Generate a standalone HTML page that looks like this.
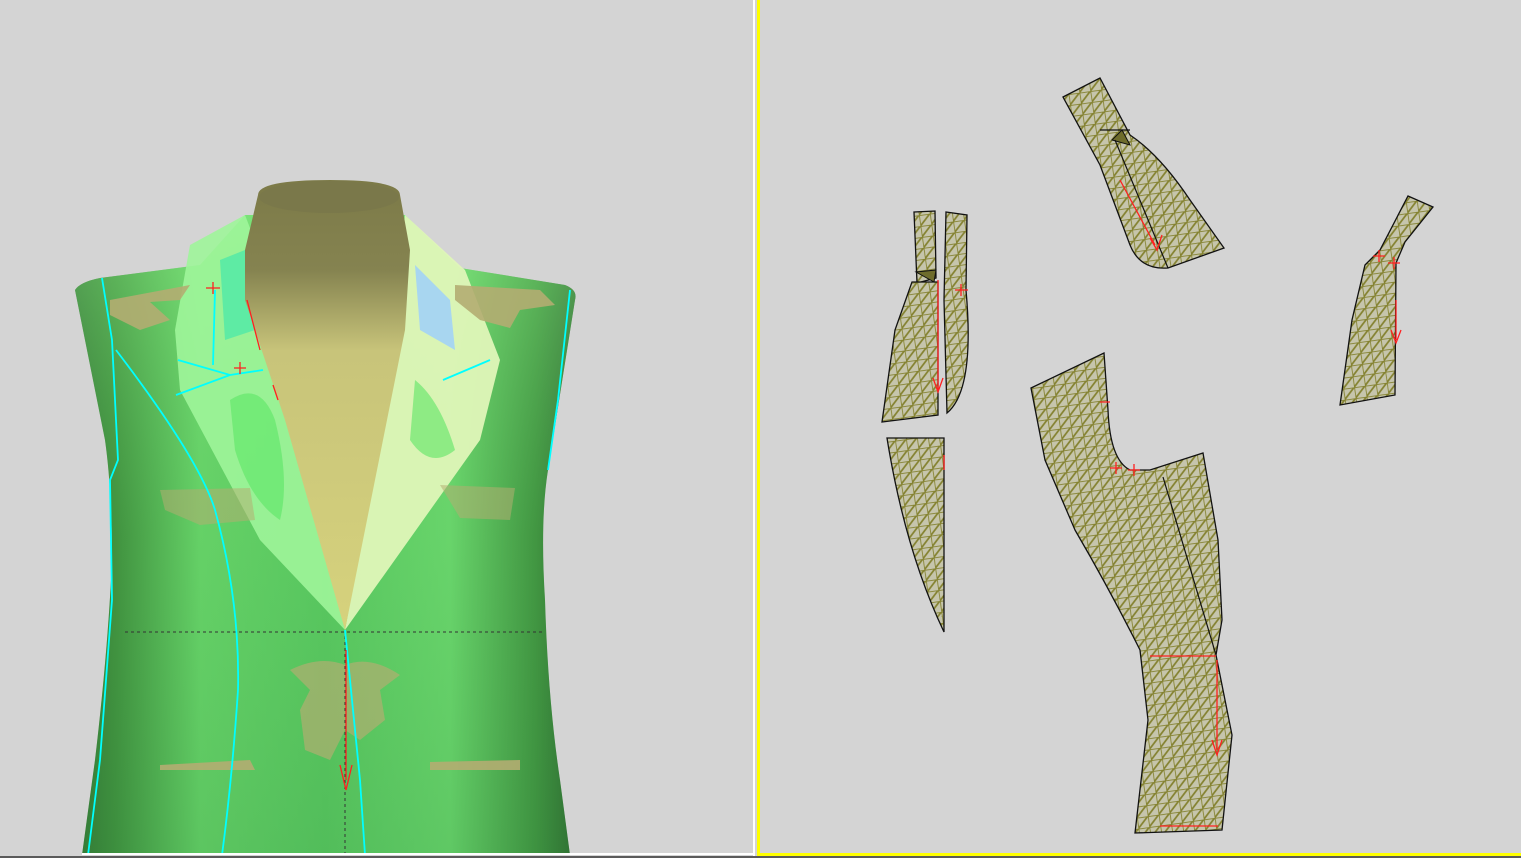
<!DOCTYPE html>
<html><head><style>
html,body{margin:0;padding:0;background:#d4d4d4;width:1521px;height:858px;overflow:hidden}
svg{display:block}
</style></head><body>
<svg width="1521" height="858" viewBox="0 0 1521 858" xmlns="http://www.w3.org/2000/svg">
<defs>
<pattern id="mesh" width="11" height="11" patternUnits="userSpaceOnUse" patternTransform="rotate(-8)">
<rect width="11" height="11" fill="#c6c5ac"/>
<path d="M0 0H11M0 0V11M0 11L11 0" stroke="#848230" stroke-width="1.7" fill="none"/>
</pattern>
<linearGradient id="body" x1="0" x2="1" y1="0" y2="0">
<stop offset="0" stop-color="#2f6a2e"/>
<stop offset="0.08" stop-color="#3e8a3a"/>
<stop offset="0.25" stop-color="#6bd86b"/>
<stop offset="0.5" stop-color="#5ccc62"/>
<stop offset="0.75" stop-color="#6fdc70"/>
<stop offset="0.92" stop-color="#3f8f3d"/>
<stop offset="1" stop-color="#2a5e2a"/>
</linearGradient>
<linearGradient id="bodyv" x1="0" x2="0" y1="0" y2="1">
<stop offset="0" stop-color="#8ff08a" stop-opacity="0.5"/>
<stop offset="0.5" stop-color="#4cb455" stop-opacity="0.2"/>
<stop offset="1" stop-color="#3a9a48" stop-opacity="0.3"/>
</linearGradient>
<linearGradient id="neck" x1="0" x2="0" y1="0" y2="1">
<stop offset="0" stop-color="#7c7a48"/>
<stop offset="0.2" stop-color="#858350"/>
<stop offset="0.38" stop-color="#c8c47a"/>
<stop offset="1" stop-color="#d6d27c"/>
</linearGradient>
</defs>
<rect width="1521" height="858" fill="#d4d4d4"/>
<path d="M75 290 Q80 282 100 278 L200 265 L245 215 L405 215 L460 268 L565 285 Q578 290 575 300 L548 470 Q540 520 545 600 Q548 700 560 780 L570 855 L82 855 L95 760 Q108 650 112 560 Q112 490 105 440 Z" fill="url(#body)"/>
<path d="M75 290 Q80 282 100 278 L200 265 L245 215 L405 215 L460 268 L565 285 Q578 290 575 300 L548 470 Q540 520 545 600 Q548 700 560 780 L570 855 L82 855 L95 760 Q108 650 112 560 Q112 490 105 440 Z" fill="url(#bodyv)"/>
<path d="M190 245 L245 215 L270 280 L345 630 L260 540 L180 390 L175 330 Z" fill="#9ff59a" opacity="0.9"/>
<path d="M405 215 L465 270 L500 360 L480 440 L345 630 L380 440 Z" fill="#dff5b8" opacity="0.95"/>
<path d="M415 265 L450 300 L455 350 L420 330 Z" fill="#a8d6f0"/>
<path d="M220 260 L245 250 L255 330 L225 340 Z" fill="#4fe8a8" opacity="0.8"/>
<path d="M230 400 Q260 380 275 420 Q290 480 280 520 Q250 500 235 450 Z" fill="#6ae870" opacity="0.8"/>
<path d="M415 380 Q440 400 455 450 Q430 470 410 440 Z" fill="#7ae878" opacity="0.8"/>
<g fill="#b4ad72" opacity="0.9">
<path d="M110 300 L190 285 L180 300 L150 302 L170 320 L140 330 L110 315 Z"/>
<path d="M455 285 L540 290 L555 305 L520 310 L510 328 L480 320 L455 300 Z"/>
<path d="M160 490 L250 488 L255 520 L200 525 L165 510 Z" opacity="0.6"/>
<path d="M440 485 L515 488 L510 520 L460 518 Z" opacity="0.6"/>
<path d="M290 670 Q320 655 345 665 Q370 655 400 675 L380 690 L385 720 L360 740 L345 730 L330 760 L305 750 L300 710 L310 690 Z" opacity="0.75"/>
<path d="M160 765 L250 760 L255 770 L160 770 Z"/>
<path d="M430 762 L520 760 L520 770 L430 770 Z"/>
</g>
<path d="M258 195 Q258 180 330 180 Q400 180 400 195 L410 250 L405 330 L345 630 L285 420 L245 300 L245 250 Z" fill="url(#neck)"/>
<ellipse cx="329" cy="197" rx="70" ry="16" fill="#7a784a"/>
<line x1="125" y1="632" x2="545" y2="632" stroke="#333" stroke-dasharray="3,3" stroke-width="1"/>
<line x1="345" y1="630" x2="345" y2="855" stroke="#333" stroke-dasharray="3,3" stroke-width="1"/>
<g fill="none" stroke="#00ffff" stroke-width="1.8">
<path d="M102 278 L112 340 L118 460 L110 480 L112 600 L100 760 L88 855"/>
<path d="M116 350 Q200 460 215 510 Q240 600 238 690 Q232 780 222 855"/>
<path d="M570 290 L558 400 L548 470"/>
<path d="M345 630 Q352 700 360 780 L365 855"/>
<path d="M215 290 L213 365 M178 360 L230 375 L263 370 M176 395 L230 375 M443 380 L490 360"/>
</g>
<g stroke="#ff2020" stroke-width="1.3" fill="none">
<path d="M247 300 L260 350 M273 385 L278 400 M346 650 L346 780 M340 765 L346 790 L352 765"/>
<path d="M206 288 H220 M213 282 V294 M234 368 H246 M240 362 V374"/>
</g>
<rect x="753" y="0" width="2" height="858" fill="#ffffff"/>
<rect x="82" y="853" width="671" height="2" fill="#ffffff"/>
<rect x="757" y="0" width="3" height="856" fill="#ffff00"/>
<rect x="757" y="853" width="764" height="3" fill="#ffff00"/>
<rect x="0" y="856" width="1521" height="2" fill="#5a5a5a"/>
<g fill="url(#mesh)" stroke="#111" stroke-width="1.3">
<path d="M1063 97 L1100 78 L1130 135 Q1160 155 1190 200 L1224 248 L1168 268 Q1140 270 1130 245 L1100 165 Z"/>
<path d="M914 212 L935 211 L936 278 L917 283 Z"/>
<path d="M946 212 L967 215 L966 290 Q975 390 947 413 L944 300 Z"/>
<path d="M912 282 L938 282 L938 415 L882 422 L895 330 Z"/>
<path d="M887 438 L944 438 L944 632 Q905 550 887 438 Z"/>
<path d="M1408 196 L1433 207 L1405 242 L1396 263 L1395 395 L1340 405 L1352 320 L1365 265 L1380 250 Z"/>
<path d="M1031 388 L1104 353 L1108 410 Q1110 460 1130 470 L1150 470 L1203 453 L1218 540 L1222 620 L1216 655 L1232 735 L1222 830 L1135 833 L1148 720 L1140 650 Q1110 590 1075 530 L1045 460 Z"/>
</g>
<g fill="#6e6c2c" stroke="#111" stroke-width="1">
<path d="M1112 140 L1122 130 L1130 145 Z"/>
<path d="M916 272 L936 270 L934 282 Z"/>
</g>
<g stroke="#111" stroke-width="1.2" fill="none">
<path d="M1115 140 L1168 268 M1163 477 L1216 655 M1100 130 L1130 130"/>
</g>
<g stroke="#ff2020" stroke-width="1.3" fill="none">
<path d="M1120 180 L1155 245 M1150 238 L1157 250 L1162 235 M938 280 L938 390 M933 378 L938 392 L943 378 M1396 300 L1396 340 M1391 330 L1396 343 L1401 330 M1217 660 L1217 750 M1212 740 L1217 755 L1222 740 M1150 656 L1216 656 M1160 826 L1218 826 M944 455 L944 470"/>
<path d="M955 290 H968 M961 284 V296 M1110 468 H1122 M1116 462 V474 M1128 470 H1140 M1134 464 V476 M1373 256 H1385 M1379 250 V262 M1388 263 H1400 M1394 257 V269 M1100 402 H1110"/>
</g>
</svg>
</body></html>
